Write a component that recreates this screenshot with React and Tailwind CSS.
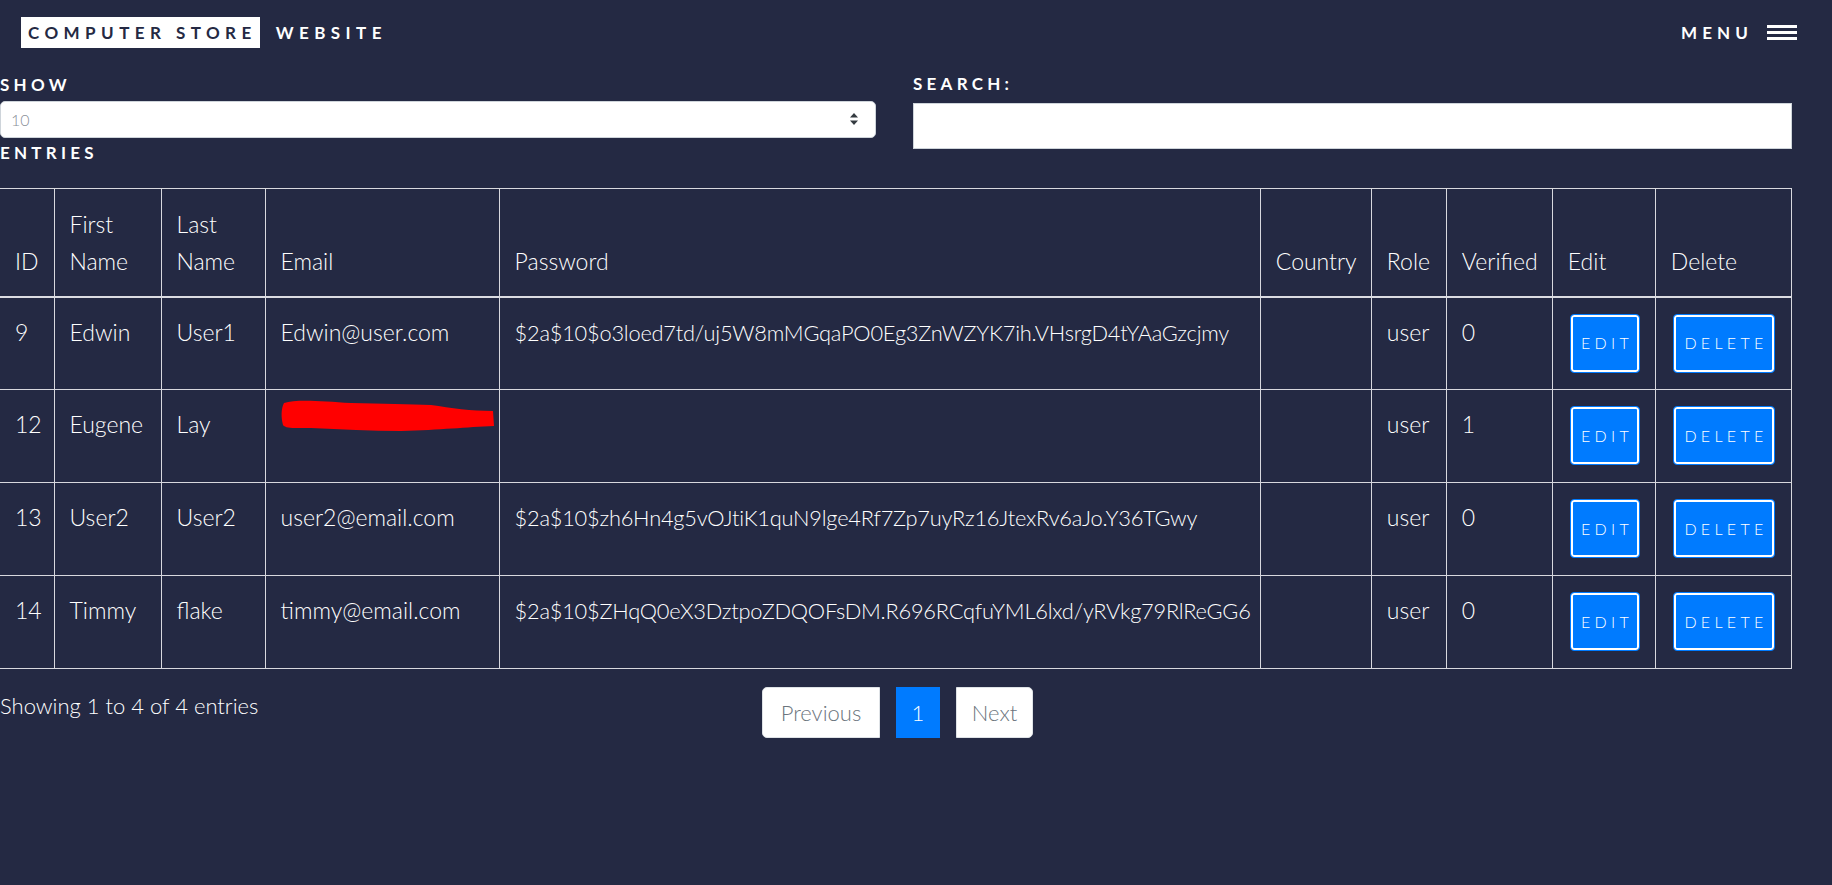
import React from "react";

const users = [
  { id: 9, first: "Edwin", last: "User1", email: "Edwin@user.com", pass: "$2a$10$o3loed7td/uj5W8mMGqaPO0Eg3ZnWZYK7ih.VHsrgD4tYAaGzcjmy", role: "user", verified: 0 },
  { id: 12, first: "Eugene", last: "Lay", email: null, pass: "", role: "user", verified: 1 },
  { id: 13, first: "User2", last: "User2", email: "user2@email.com", pass: "$2a$10$zh6Hn4g5vOJtiK1quN9lge4Rf7Zp7uyRz16JtexRv6aJo.Y36TGwy", role: "user", verified: 0 },
  { id: 14, first: "Timmy", last: "flake", email: "timmy@email.com", pass: "$2a$10$ZHqQ0eX3DztpoZDQOFsDM.R696RCqfuYML6lxd/yRVkg79RlReGG6", role: "user", verified: 0 },
];

const colWidths = [54, 107, 104, 234, 761, 111, 75, 106, 103, 136];

function Scribble() {
  return (
    <svg width="214" height="34" viewBox="0 0 214 34" className="block mt-[-7px]">
      <path
        d="M3,4 C15,0 40,2 70,4 C100,5 130,5 150,6 C170,9 190,12 212,12 L213,27 C185,28 160,31 120,32 C90,32 60,30 30,29 C15,29 5,30 2,26 C0,18 0,10 3,4 Z"
        fill="#ff0000"
      />
    </svg>
  );
}

function ActionButton({ label, width }) {
  return (
    <button
      className={`${width} h-[59px] bg-[#007bff] border border-[#007bff] rounded-[4px] shadow-[inset_0_0_0_2px_#ffffff] text-white text-[16px] tracking-[0.27em] pl-[0.27em] uppercase leading-none`}
    >
      {label}
    </button>
  );
}

export default function App() {
  const th = "align-bottom text-left font-light px-[15px] pb-[16px] border border-[#d8d8de] border-b-2 border-b-[#dcdce2]";
  const td = "align-top text-left font-light px-[15px] pt-[16px] border border-[#d8d8de] whitespace-nowrap";

  return (
    <div className="min-h-screen bg-[#242943] text-white font-['Lato','Liberation_Sans',sans-serif]">
      <header className="flex items-center justify-between h-[65px] pl-[21px] pr-[35px]">
        <div className="flex items-center">
          <span className="bg-white text-[#242943] font-bold text-[17px] tracking-[0.32em] h-[31px] leading-[31px] pl-[7px] pr-[3px]">
            COMPUTER STORE
          </span>
          <span className="ml-[16px] font-bold text-[17px] tracking-[0.32em]">WEBSITE</span>
        </div>
        <div className="flex items-center">
          <span className="font-bold text-[17px] tracking-[0.3em]">MENU</span>
          <span className="ml-[14px] flex flex-col gap-[3px] w-[30px]">
            <span className="h-[3px] bg-white" />
            <span className="h-[3px] bg-white" />
            <span className="h-[3px] bg-white" />
          </span>
        </div>
      </header>

      <main className="w-[1792px]">
        <div className="flex pt-[9px]">
          <div className="w-[876px]">
            <label className="block font-bold text-[17px] tracking-[0.25em] leading-[22px]">SHOW</label>
            <div className="relative mt-[5px] h-[37px] bg-white rounded-[5px] border border-[#ced4da] flex items-center pl-[10px]">
              <span className="text-[16px] text-[#8a8f99] font-light">10</span>
              <svg width="10" height="14" viewBox="0 0 10 14" className="absolute right-[16px] top-[10px]">
                <path d="M5 1 L9 5.5 L1 5.5 Z" fill="#343a40" />
                <path d="M5 13 L9 8.5 L1 8.5 Z" fill="#343a40" />
              </svg>
            </div>
            <label className="block mt-[4px] font-bold text-[17px] tracking-[0.25em] leading-[22px]">ENTRIES</label>
          </div>
          <div className="ml-[37px] flex-1">
            <label className="block font-bold text-[17px] tracking-[0.25em] leading-[22px] mt-[-1px]">SEARCH:</label>
            <input className="block mt-[8px] w-full h-[46px] bg-white border border-[#ced4da] outline-none" />
          </div>
        </div>

        <table className="mt-[24px] table-fixed border-collapse w-[1792px] text-[23px] leading-[37px]">
          <colgroup>
            {colWidths.map((w, i) => (
              <col key={i} style={{ width: w }} />
            ))}
          </colgroup>
          <thead>
            <tr className="h-[108px]">
              <th className={`${th} border-l-0`}>ID</th>
              <th className={th}>First Name</th>
              <th className={th}>Last Name</th>
              <th className={th}>Email</th>
              <th className={th}>Password</th>
              <th className={th}>Country</th>
              <th className={th}>Role</th>
              <th className={th}>Verified</th>
              <th className={th}>Edit</th>
              <th className={th}>Delete</th>
            </tr>
          </thead>
          <tbody>
            {users.map((u) => (
              <tr key={u.id} className="h-[93px]">
                <td className={`${td} border-l-0`}>{u.id}</td>
                <td className={td}>{u.first}</td>
                <td className={td}>{u.last}</td>
                <td className={td}>{u.email ? u.email : <Scribble />}</td>
                <td className={`${td} text-[21.8px] tracking-[-0.01em]`}>{u.pass}</td>
                <td className={td}></td>
                <td className={td}>{u.role}</td>
                <td className={td}>{u.verified}</td>
                <td className={`${td} pl-[17px]`}>
                  <ActionButton label="Edit" width="w-[70px]" />
                </td>
                <td className={`${td} pl-[17px]`}>
                  <ActionButton label="Delete" width="w-[102px]" />
                </td>
              </tr>
            ))}
          </tbody>
        </table>

        <div className="flex items-start mt-[18px]">
          <div className="w-[762px] text-[22px] leading-[37px] font-light">Showing 1 to 4 of 4 entries</div>
          <nav className="flex gap-[16px] text-[22px] font-light">
            <span className="w-[118px] h-[51px] flex items-center justify-center bg-white text-[#6c757d] border border-[#dee2e6] rounded-l-[5px]">
              Previous
            </span>
            <span className="w-[44px] h-[51px] flex items-center justify-center bg-[#007bff] text-white">1</span>
            <span className="w-[77px] h-[51px] flex items-center justify-center bg-white text-[#6c757d] border border-[#dee2e6] rounded-r-[5px]">
              Next
            </span>
          </nav>
        </div>
      </main>
    </div>
  );
}
